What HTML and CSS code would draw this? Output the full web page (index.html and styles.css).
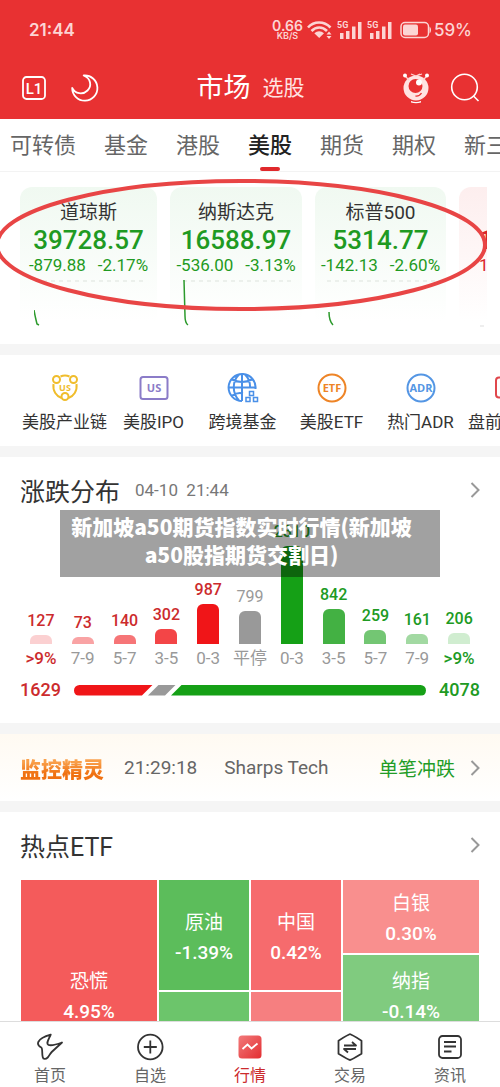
FILE: index.html
```html
<!DOCTYPE html>
<html lang="zh-CN">
<head>
<meta charset="utf-8">
<meta name="viewport" content="width=device-width, initial-scale=1">
<title>市场 - 美股</title>
<link rel="stylesheet" href="styles.css">
</head>
<body>
<div class="app">
  <header class="top">
    <div class="status">
      <span class="clock">21:44</span>
      <div class="status-icons">
        <span class="speed"><span>0.66</span><span class="speed-unit">KB/S</span></span>
        <svg class="wifi" width="26" height="20" viewBox="0 0 26 20" fill="none" stroke="currentColor" stroke-width="2.6">
          <path d="M1 7.500C7 .8 17 .8 23.500 7.500M4.500 11C9 6.300 15.500 6.300 20 11"/>
          <path d="M7.300 13.300c3-2.800 6.700-2.800 9.700 0L12.200 18z" fill="currentColor" stroke="none"/>
          <path d="M19.500 14.500 22 11.500l2.500 3zM19.500 16 22 19l2.500-3z" fill="currentColor" stroke="none"/>
        </svg>
        <svg class="signal" width="26" height="20" viewBox="0 0 26 20" fill="currentColor">
          <text x="0" y="8" class="g5">5G</text>
          <path d="M3 13h3.500v6H3zM9 11h3.500v8H9zM15 6.500h3.500V19H15zM21 2h3.500v17H21z"/>
        </svg>
        <svg class="signal" width="26" height="20" viewBox="0 0 26 20" fill="currentColor">
          <text x="0" y="8" class="g5">5G</text>
          <path d="M3 13h3.500v6H3zM9 11h3.500v8H9zM15 6.500h3.500V19H15zM21 2h3.500v17H21z"/>
        </svg>
        <svg class="battery" width="32" height="18" viewBox="0 0 32 18" fill="none">
          <rect x="1" y="1.500" width="27.500" height="15" rx="4" stroke="currentColor" stroke-width="1.500"/>
          <rect x="3" y="3.500" width="15" height="11" rx="2" fill="currentColor"/>
          <path d="M29.500 6c2 0 2 6 0 6z" fill="currentColor"/>
        </svg>
        <span class="percent">59%</span>
      </div>
    </div>
    <div class="title-bar">
      <div class="tools">
        <button class="icon-btn" aria-label="L1 行情">
          <svg width="26" height="26" viewBox="0 0 26 26" fill="none" stroke="#fff" stroke-width="1.800">
            <rect x="2" y="2" width="22" height="22" rx="3.500"/>
            <text x="13" y="18.500" class="level">L1</text>
          </svg>
        </button>
        <button class="icon-btn" aria-label="夜间模式">
          <svg width="28" height="28" viewBox="0 0 28 28" fill="none" stroke="#fff" stroke-width="1.800" stroke-linejoin="round">
            <path d="M12.700 1.500A12.600 12.600 0 1 1 1.200 14C4 20 12 21 16.500 16.500S20 4.500 12.700 1.500z"/>
          </svg>
        </button>
      </div>
      <nav class="switch">
        <button class="switch-on">市场</button>
        <button class="switch-off">选股</button>
      </nav>
      <div class="tools tools-right">
        <button class="icon-btn" aria-label="智能助手">
          <svg width="28" height="32" viewBox="0 0 28 32" fill="none">
            <circle cx="14" cy="16" r="12.500" fill="#ffe3e2"/>
            <path d="M3 4l4 4M25 4l-4 4M9 2l5 2 4-2M14 4l6-2" stroke="#ffd2d0" stroke-width="1.300"/>
            <circle cx="3" cy="3.500" r="2" fill="#fff"/><circle cx="25" cy="3.500" r="2" fill="#fff"/>
            <circle cx="13.500" cy="14" r="7" fill="#e83132"/>
            <circle cx="17" cy="10.500" r="3" fill="#fff"/>
            <path d="M13.500 24q4 .5 6-3" stroke="#e83132" stroke-width="1.300"/>
            <path d="M9 29q5 2 10 0v1.500q-5 1.500-10 0z" fill="#fff"/>
          </svg>
        </button>
        <button class="icon-btn" aria-label="搜索">
          <svg width="30" height="30" viewBox="0 0 30 30" fill="none" stroke="#fff" stroke-width="1.600">
            <circle cx="14.500" cy="14" r="12.800"/><path d="M23.500 23l5 5"/>
          </svg>
        </button>
      </div>
    </div>
  </header>

  <nav class="tabs">
    <button>可转债</button><button>基金</button><button>港股</button><button class="active">美股</button><button>期货</button><button>期权</button><button>新三</button>
  </nav>

  <main class="content">
    <section class="indices">
      <div class="cards">
        <article class="card">
          <h3>道琼斯</h3><p class="value">39728.57</p>
          <p class="change"><span>-879.88</span><span>-2.17%</span></p>
          <svg class="spark" width="109" height="48" viewBox="0 0 109 48" fill="none"><path d="M1 2h108" stroke="#dde3dd" stroke-dasharray="4 4"/><path d="M0 31q1 6 3 14l2 1" stroke="#2c9a2c" stroke-width="1.500"/></svg>
        </article>
        <article class="card">
          <h3>纳斯达克</h3><p class="value">16588.97</p>
          <p class="change"><span>-536.00</span><span>-3.13%</span></p>
          <svg class="spark" width="109" height="48" viewBox="0 0 109 48" fill="none"><path d="M1 2h108" stroke="#dde3dd" stroke-dasharray="4 4"/><path d="M2 1l1 36q0 7 3 9" stroke="#2c9a2c" stroke-width="1.500"/></svg>
        </article>
        <article class="card">
          <h3>标普500</h3><p class="value">5314.77</p>
          <p class="change"><span>-142.13</span><span>-2.60%</span></p>
          <svg class="spark" width="109" height="48" viewBox="0 0 109 48" fill="none"><path d="M1 2h108" stroke="#dde3dd" stroke-dasharray="4 4"/><path d="M3 33q0 9 4 13" stroke="#2c9a2c" stroke-width="1.500"/></svg>
        </article>
        <article class="card card-up">
          <h3>&nbsp;</h3><p class="value">1</p>
          <p class="change"><span>1</span></p>
          <svg class="spark" width="109" height="48" viewBox="0 0 109 48" fill="none"><path d="M-7 47h116" stroke="#ddd" stroke-dasharray="4 4"/></svg>
        </article>
      </div>
      <svg class="ring" viewBox="0 0 500 140" preserveAspectRatio="none" fill="none">
        <ellipse cx="241" cy="70" rx="244" ry="64" stroke="#e84545" stroke-width="4"/>
      </svg>
    </section>

    <section class="shortcuts">
      <a href="#chain">
        <svg width="32" height="32" viewBox="0 0 32 32" fill="none" stroke="#f0bd2c" stroke-width="2">
          <path d="M11.500 4.500q4.500-2 9 0M4.500 12c-1 7 3 12.500 8 14M27.500 12c1 7-3 12.500-8 14"/>
          <circle cx="7.500" cy="7.500" r="3.500"/><circle cx="24.500" cy="7.500" r="3.500"/><circle cx="16" cy="24.500" r="3.500"/>
          <text x="16" y="18.500" class="ico-s" fill="#f0bd2c">US</text>
        </svg>美股产业链</a>
      <a href="#ipo">
        <svg width="32" height="32" viewBox="0 0 32 32" fill="none" stroke="#8b7cc8" stroke-width="2">
          <rect x="2.500" y="5" width="27" height="22" rx="2.500"/>
          <text x="16" y="20" class="ico-m" fill="#8b7cc8">US</text>
        </svg>美股IPO</a>
      <a href="#fund">
        <svg width="32" height="32" viewBox="0 0 32 32" fill="none" stroke="#4a90e8" stroke-width="2">
          <path d="M15 29A13.500 13.500 0 1 1 28.500 17M15 2v27M2 15.500h26M12 2.500c-7 7-7 18 0 26M18 2.500c4 4 5.500 8 5 14M5 7.500q10 5 20 0M5 23.500q6-3.500 11-2"/>
          <path d="M22.500 19.500h4v4h-4zM19 25.500h4v4h-4zM26.500 25.500h4v4h-4z" stroke-width="1.500"/>
        </svg>跨境基金</a>
      <a href="#etf">
        <svg width="32" height="32" viewBox="0 0 32 32" fill="none" stroke="#ee8426" stroke-width="2">
          <circle cx="16" cy="16" r="13.500"/><text x="16" y="19.500" class="ico-m" fill="#ee8426">ETF</text>
        </svg>美股ETF</a>
      <a href="#adr">
        <svg width="32" height="32" viewBox="0 0 32 32" fill="none" stroke="#5496e4" stroke-width="2">
          <circle cx="16" cy="16" r="13.500"/><text x="16" y="19.500" class="ico-m" fill="#5496e4">ADR</text>
        </svg>热门ADR</a>
      <a href="#pre" class="cut">
        <svg width="32" height="32" viewBox="0 0 32 32" fill="none" stroke="#e0474c" stroke-width="2">
          <rect x="3" y="5.500" width="26" height="20" rx="3"/>
        </svg>盘前</a>
    </section>

    <section class="spread">
      <div class="head">
        <h2>涨跌分布</h2><time>04-10&nbsp; 21:44</time>
        <svg class="chev" width="10" height="18" viewBox="0 0 10 18"><path d="M1.500 2l7 7-7 7"/></svg>
      </div>
      <div class="bars">
        <div class="col up"><b>127</b><i class="h9 r1"></i><span class="hot">&gt;9%</span></div>
        <div class="col up"><b>73</b><i class="h7 r2"></i><span>7-9</span></div>
        <div class="col up"><b>140</b><i class="h9 r3"></i><span>5-7</span></div>
        <div class="col up"><b>302</b><i class="h15 r4"></i><span>3-5</span></div>
        <div class="col up"><b>987</b><i class="h40 r5"></i><span>0-3</span></div>
        <div class="col"><b>799</b><i class="h33 flat"></i><span>平停</span></div>
        <div class="col down"><b>2810</b><i class="h98 g5c"></i><span>0-3</span></div>
        <div class="col down"><b>842</b><i class="h35 g4"></i><span>3-5</span></div>
        <div class="col down"><b>259</b><i class="h14 g3"></i><span>5-7</span></div>
        <div class="col down"><b>161</b><i class="h10 g2"></i><span>7-9</span></div>
        <div class="col down"><b>206</b><i class="h11 g1"></i><span class="hot">&gt;9%</span></div>
      </div>
      <div class="total">
        <strong class="up-text">1629</strong>
        <div class="ratio"><i class="ratio-up"></i><i class="ratio-flat"></i><i class="ratio-down"></i></div>
        <strong class="down-text">4078</strong>
      </div>
      <p class="caption">新加坡a50期货指数实时行情(新加坡<br>a50股指期货交割日)</p>
    </section>

    <section class="monitor">
      <strong class="brand">监控精灵</strong><time>21:29:18</time><span class="stock">Sharps Tech</span><span class="event">单笔冲跌</span>
      <svg class="chev" width="10" height="18" viewBox="0 0 10 18"><path d="M1.500 2l7 7-7 7"/></svg>
    </section>

    <section class="etf">
      <div class="head">
        <h2>热点ETF</h2>
        <svg class="chev" width="10" height="18" viewBox="0 0 10 18"><path d="M1.500 2l7 7-7 7"/></svg>
      </div>
      <div class="map">
        <div class="stack"><div class="tile fear">恐慌<b>4.95%</b></div></div>
        <div class="stack"><div class="tile oil">原油<b>-1.39%</b></div><div class="tile oil-next"></div></div>
        <div class="stack"><div class="tile china">中国<b>0.42%</b></div><div class="tile china-next"></div></div>
        <div class="stack"><div class="tile silver">白银<b>0.30%</b></div><div class="tile nasdaq">纳指<b>-0.14%</b></div></div>
      </div>
    </section>
  </main>

  <nav class="bottom">
    <a href="#home">
      <svg width="28" height="28" viewBox="0 0 28 28" fill="none" stroke="#333" stroke-width="1.800" stroke-linejoin="round"><path d="M14.700 1.700C10 3 4 5.500 2.300 9c-1 2.500 0 4 3 5.500 1.500 1 .5 7 1.400 9.500.5 2.500 3 2.500 5 .5 1.500-1.500 2-3.500 4-5.500L26 9.500c-4 1.500-10 3.500-13.500 2.500-3-1.500.5-6 2.200-10.300z"/></svg>首页</a>
    <a href="#mine">
      <svg width="28" height="28" viewBox="0 0 28 28" fill="none" stroke="#333" stroke-width="1.800"><circle cx="14.300" cy="14" r="12.300"/><path d="M14.300 7.500v13M7.800 14h13"/></svg>自选</a>
    <a href="#quotes" class="current">
      <svg width="28" height="28" viewBox="0 0 28 28" fill="none"><defs><linearGradient id="rg" x1="0" y1="0" x2="1" y2="1"><stop offset="0" stop-color="#f27b7b"/><stop offset="1" stop-color="#e32d31"/></linearGradient></defs><rect x="2.500" y="2.500" width="23" height="23" rx="3.500" fill="url(#rg)"/><path d="M6.500 16l5-4.500 4 4 6-5" stroke="#fff" stroke-width="1.800"/></svg>行情</a>
    <a href="#trade">
      <svg width="28" height="28" viewBox="0 0 28 28" fill="none" stroke="#333" stroke-width="1.800" stroke-linejoin="round"><path d="M14 1.200q1 0 11.500 6.500v13Q15 27 14 27T2.500 20.700v-13Q13 1.200 14 1.200z"/><path d="M8 12.500h12l-4-3.500M20 16H8l4 3.500"/></svg>交易</a>
    <a href="#news">
      <svg width="28" height="28" viewBox="0 0 28 28" fill="none" stroke="#333" stroke-width="1.800"><rect x="3" y="3" width="22" height="22" rx="3.500"/><path d="M8 9h12M8 13.500h12M8 18.500h7.500"/></svg>资讯</a>
  </nav>
</div>
</body>
</html>
```

FILE: styles.css
```css
* { box-sizing: border-box; }
body, h2, h3, p { margin: 0; }
body { font-family: Roboto, "Noto Sans CJK SC", sans-serif; color: #333; background: #fff; }
button { border: 0; padding: 0; background: none; color: inherit; font: inherit; cursor: pointer; }
a { color: inherit; text-decoration: none; }
svg { display: block; flex: none; }

.app { display: flex; flex-direction: column; height: 100vh; overflow: hidden; }

/* Header */
.top { flex: none; background: #e83132; color: #fff; padding-bottom: 11px; }
.status { display: flex; align-items: center; justify-content: space-between; height: 60px; padding: 0 28px 0 29px; color: #fcd5d4; font-family: Inter, sans-serif; }
.clock { font-size: 17px; font-weight: 600; }
.status-icons { display: flex; align-items: center; gap: 4px; }
.speed { display: flex; flex-direction: column; align-items: center; font-size: 14px; line-height: 12px; font-weight: 600; }
.speed-unit { font-size: 9px; line-height: 8px; }
.g5 { font: 700 9px Roboto, sans-serif; }
.battery { margin-left: 3px; }
.percent { margin-left: -2px; font-size: 17px; font-weight: 500; }
.title-bar { display: grid; grid-template-columns: 1fr auto 1fr; align-items: center; height: 48px; padding: 8px 20px 0 21px; }
.tools { display: flex; align-items: center; gap: 24px; }
.tools-right { justify-content: flex-end; gap: 20px; }
.level { fill: #fff; stroke: none; font: 500 15px Roboto, sans-serif; text-anchor: middle; }
.switch { display: flex; align-items: center; gap: 12px; white-space: nowrap; }
.switch-on { font-size: 27px; line-height: 36px; }
.switch-off { font-size: 21px; line-height: 36px; color: #ffe3e2; }

.tabs { flex: none; display: flex; gap: 28px; height: 53px; padding-left: 10px; overflow: hidden; border-bottom: 1px solid #f3f3f3; }
.tabs button { flex: none; position: relative; padding-bottom: 4px; font-size: 22px; color: #666; white-space: nowrap; }
.tabs .active { color: #222; font-weight: 500; }
.tabs .active::after { content: ""; position: absolute; left: 50%; bottom: 0; width: 20px; height: 4px; margin-left: -10px; border-radius: 2px; background: #e0292c; }

.content { flex: 1; min-height: 0; overflow: hidden; display: flex; flex-direction: column; gap: 11px; background: #f5f5f5; }
.content > section { flex: none; background: #fff; }

/* Index cards */
.indices { position: relative; padding: 15px 13px 17px 20px; }
.cards { display: grid; grid-template-columns: 137px 132px 131px 132px; gap: 13px; overflow: hidden; }
.card { display: flex; flex-direction: column; align-items: center; padding-top: 13px; border-radius: 12px; background: linear-gradient(#f0f9f1, #fff 96%); color: #1f9a22; }
.card h3 { color: #333; font-size: 19px; line-height: 25px; font-weight: 400; }
.value { font-size: 26px; line-height: 30px; font-weight: 500; }
.change { display: flex; gap: 12px; font-size: 17px; line-height: 20px; }
.spark { margin-top: 4px; }
.card-up { align-items: flex-start; padding-left: 20px; background: linear-gradient(#fdeeee, #fff 96%); color: #d9262a; }
.ring { position: absolute; left: 0; top: 3px; width: 100%; height: 140px; }

/* Shortcuts */
.shortcuts { display: flex; padding: 17px 0 12px 20px; overflow: hidden; }
.shortcuts a { flex: 0 0 89px; display: flex; flex-direction: column; align-items: center; gap: 6px; font-size: 17px; line-height: 24px; white-space: nowrap; }
.shortcuts .cut { align-items: flex-start; padding-left: 3px; }
.cut svg { margin-left: 25px; }
.ico-s, .ico-m { font-family: "Open Sans", sans-serif; font-weight: 700; text-anchor: middle; stroke: none; }
.ico-s { font-size: 9px; }
.ico-m { font-size: 11px; }

/* Section heads */
.head { display: flex; align-items: center; padding: 0 20px; height: 66px; }
.head h2 { font-size: 25px; font-weight: 400; }
.head time { margin-left: 15px; font-size: 17px; color: #777; }
.chev { margin-left: auto; fill: none; stroke: #999; stroke-width: 2; }

/* Distribution */
.spread { position: relative; padding-bottom: 22px; }
.bars { display: grid; grid-template-columns: repeat(11, 1fr); align-items: end; margin-top: -1px; padding: 0 20px; }
.col { display: flex; flex-direction: column; align-items: center; color: #999; }
.col b { font-size: 16px; line-height: 20px; font-weight: 500; margin-bottom: 4px; }
.col:nth-child(6) b { font-weight: 400; }
.col span { font-size: 17px; line-height: 20px; margin-top: 4px; white-space: nowrap; }
.col i { width: 22px; border-radius: 6px 6px 0 0; }
.up b, .up .hot, .up-text { color: #cc2b2d; font-weight: 500; }
.down b, .down .hot, .down-text { color: #209a23; font-weight: 500; }
.h7 { height: 7px; } .h9 { height: 9px; } .h10 { height: 10px; } .h11 { height: 11px; }
.h14 { height: 14px; } .h15 { height: 15px; } .h33 { height: 33px; } .h35 { height: 35px; }
.h40 { height: 40px; } .h98 { height: 98px; }
.r1 { background: #fbd0d1; } .r2 { background: #f9a3a4; } .r3 { background: #f67577; }
.r4 { background: #f34547; } .r5 { background: #f01518; } .flat { background: #999; }
.g5c { background: #15a016; } .g4 { background: #43b143; } .g3 { background: #73c673; }
.g2 { background: #a2d9a2; } .g1 { background: #d0edd0; }
.total { display: flex; align-items: center; gap: 13px; margin-top: 11px; padding: 0 20px; font-size: 18px; line-height: 22px; }
.ratio { flex: 1; display: flex; height: 11px; border-radius: 6px; overflow: hidden; }
.ratio-up { flex: 79; background: #f01518; clip-path: polygon(0 0, 100% 0, calc(100% - 11px) 100%, 0 100%); }
.ratio-flat { flex: 28; margin: 0 -5px; background: #999; clip-path: polygon(11px 0, 100% 0, calc(100% - 11px) 100%, 0 100%); }
.ratio-down { flex: 255; background: #15a016; clip-path: polygon(11px 0, 100% 0, 100% 100%, 0 100%); }
.caption { position: absolute; left: 12%; right: 12%; top: 53px; padding: 2px 26px 9px 9px; background: rgba(0, 0, 0, .37); color: #fff; font: 900 21px/28px "Noto Sans CJK SC", sans-serif; text-align: center; white-space: nowrap; }

/* Monitor */
.monitor { display: flex; align-items: center; height: 67px; padding: 0 20px; font-size: 19px; color: #666; white-space: nowrap; }
.content > .monitor { background: linear-gradient(#fffaf2, #fff); }
.brand { font-size: 21px; font-weight: 900; background: linear-gradient(#f9a04b 30%, #f07010 70%); background-clip: text; -webkit-background-clip: text; color: transparent; }
.monitor time { margin-left: 20px; }
.stock { margin-left: 27px; }
.event { margin-left: auto; color: #229c26; }
.monitor .chev { margin-left: 15px; }

/* Heat map */
.map { display: grid; grid-template-columns: 136fr 90fr 90fr 136fr; gap: 2px; height: 228px; margin: 2px 21px 0; }
.stack { display: flex; flex-direction: column; gap: 2px; }
.tile { flex: 1; display: flex; flex-direction: column; align-items: center; justify-content: center; padding-top: 5px; color: #fff; font-size: 19px; line-height: 30px; }
.tile b { font-size: 19px; font-weight: 500; }
.fear { background: #f45b5b; }
.oil { flex: 0 0 110px; background: #5cbd5b; }
.oil-next { background: #6cc56b; }
.china { flex: 0 0 110px; background: #f66b6d; }
.china-next { background: #f67f80; }
.silver { flex: 0 0 73px; background: #f98f8e; }
.nasdaq { flex: 0 0 78px; background: #80cb7f; }

/* Bottom navigation */
.bottom { flex: none; display: grid; grid-template-columns: repeat(5, 1fr); height: 66px; padding-top: 11px; border-top: 1px solid #ddd; background: #fff; }
.bottom a { display: flex; flex-direction: column; align-items: center; gap: 4px; font-size: 16px; line-height: 22px; color: #666; }
.bottom .current { color: #cc2b2d; }
```
